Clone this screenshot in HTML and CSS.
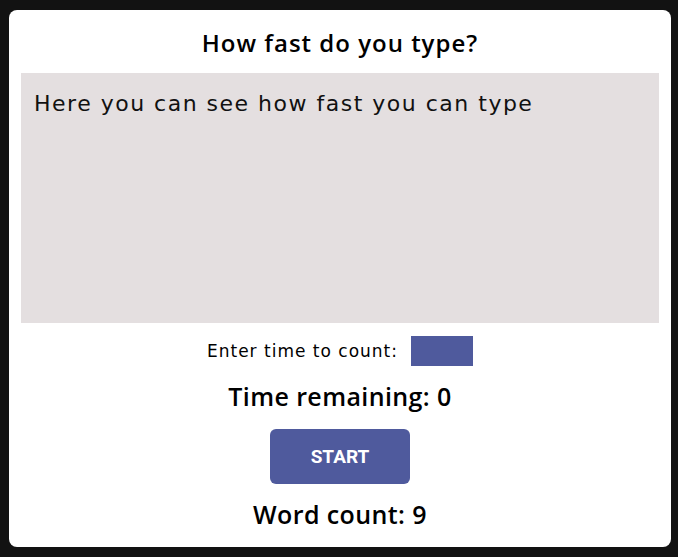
FILE: index.html
```html
<!DOCTYPE html>
<html>
<head>
<meta charset="utf-8">
<link rel="stylesheet" href="styles.css">
</head>
<body>
<div class="card">
  <h1 class="title">How fast do you type?</h1>
  <textarea class="typing" spellcheck="false">Here you can see how fast you can type</textarea>
  <div class="time-row">
    <label class="time-label">Enter time to count:</label>
    <input class="time-input" type="text">
  </div>
  <div class="remaining">Time remaining: 0</div>
  <button class="start">START</button>
  <div class="count">Word count: 9</div>
</div>
</body>
</html>
```
FILE: styles.css
```css
html, body {
  margin: 0;
  padding: 0;
  background: #121212;
}
body {
  padding: 10px 7px 10px 9px;
  font-family: "DejaVu Sans", sans-serif;
  color: #000;
}
.card {
  background: #fff;
  border-radius: 8px;
  height: 537px;
  box-sizing: border-box;
  padding: 17px 12px 0;
  display: flex;
  flex-direction: column;
  align-items: center;
}
.title {
  margin: 0 0 14px;
  font-family: "Open Sans", sans-serif;
  font-size: 24px;
  font-weight: 600;
  line-height: 32px;
  letter-spacing: 1px;
}
.typing {
  align-self: stretch;
  height: 250px;
  box-sizing: border-box;
  border: none;
  outline: none;
  resize: none;
  background: #e4dfe0;
  margin: 0;
  padding: 14px 13px;
  font-family: "DejaVu Sans", sans-serif;
  font-size: 22px;
  letter-spacing: 1.5px;
  line-height: 34px;
  color: #111;
}
.time-row {
  margin-top: 13px;
  display: flex;
  align-items: center;
  gap: 13px;
  height: 30px;
}
.time-label {
  font-size: 17px;
  letter-spacing: 1px;
}
.time-input {
  width: 62px;
  height: 30px;
  box-sizing: border-box;
  border: none;
  background: #4f5a9d;
  margin: 0;
  padding: 0;
}
.remaining, .count {
  font-family: "Open Sans", sans-serif;
  font-size: 25px;
  font-weight: 600;
  line-height: 30px;
  margin-top: 15px;
  letter-spacing: 0.4px;
}
.start {
  margin-top: 18px;
  width: 140px;
  height: 55px;
  border: none;
  border-radius: 6px;
  background: #4f5a9d;
  color: #fff;
  font-family: Roboto, sans-serif;
  font-weight: 700;
  font-size: 19px;
}
```
